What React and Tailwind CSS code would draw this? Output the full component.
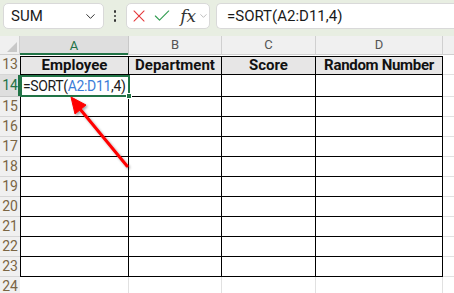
import { X, Check, ChevronDown } from 'lucide-react';

function RowHead({ n, selected }) {
  return (
    <div
      className={
        'flex w-[20px] shrink-0 items-center justify-center border-b text-[14px] ' +
        (selected
          ? 'border-b-[#c8c8c8] bg-[#dedede] text-[#217346] shadow-[inset_-2px_0_0_#217346]'
          : 'border-b-[#d6d6d6] bg-[#f0f0f0] text-[#7a6544]')
      }
    >
      {n}
    </div>
  );
}

function BlankRow({ n, h = 'h-[20px]' }) {
  return (
    <div className={'flex ' + h}>
      <RowHead n={n} />
      <div className="w-[109px] border-x border-b border-black" />
      <div className="w-[93px] border-r border-b border-black" />
      <div className="w-[94px] border-r border-b border-black" />
      <div className="w-[127px] border-r border-b border-black" />
      <div className="flex-1 border-b border-[#e1e1e1]" />
    </div>
  );
}

export default function App() {
  const rows = [15, 16, 17, 18, 19, 20, 21, 22, 23];

  return (
    <div className="relative h-[293px] w-[454px] overflow-hidden bg-white font-['Roboto',sans-serif] text-[#1a1a1a]">
      {/* formula bar */}
      <div className="flex h-[36px] items-start bg-[#e8eee2] pt-[3px]">
        <div className="ml-[3px] flex h-[26px] w-[101px] items-center justify-between rounded-[5px] border border-[#d9d9d9] bg-white pl-[7px] pr-[5px]">
          <span className="text-[15px]">SUM</span>
          <ChevronDown size={15} strokeWidth={1.6} className="text-[#333]" />
        </div>
        <div className="flex h-[26px] w-[22px] flex-col items-center justify-center gap-[2px]">
          <span className="h-[2.5px] w-[2.5px] rounded-full bg-[#333]" />
          <span className="h-[2.5px] w-[2.5px] rounded-full bg-[#333]" />
          <span className="h-[2.5px] w-[2.5px] rounded-full bg-[#333]" />
        </div>
        <div className="flex h-[26px] w-[84px] items-center rounded-[5px] border border-[#d9d9d9] bg-white pl-[2px]">
          <X size={22} strokeWidth={1.3} className="text-[#e5383b]" />
          <Check size={22} strokeWidth={1.3} className="ml-[3px] text-[#2e9b4e]" />
          <span className="ml-[8px] font-['DejaVu_Serif',serif] text-[17px] italic leading-none text-[#333]">fx</span>
          <ChevronDown size={12} strokeWidth={1.4} className="ml-[2px] text-[#999]" />
        </div>
        <div className="ml-[6px] flex h-[26px] flex-1 items-center rounded-l-[5px] border border-r-0 border-[#d9d9d9] bg-white pl-[10px] text-[15px]">
          =SORT(A2:D11,4)
        </div>
      </div>

      {/* column headers */}
      <div className="flex h-[19px] bg-[#f0f0f0] text-[13px] text-[#555]">
        <div className="relative w-[20px] border-r border-b border-[#d0d0d0]">
          <span className="absolute bottom-[2px] right-[2px] h-0 w-0 border-b-[10px] border-l-[10px] border-b-[#c8c8c8] border-l-transparent" />
        </div>
        <div className="flex w-[109px] items-center justify-center border-r border-[#c8c8c8] bg-[#dedede] text-[#217346] shadow-[inset_0_-2px_0_#217346]">A</div>
        <div className="flex w-[93px] items-center justify-center border-r border-b border-[#d0d0d0]">B</div>
        <div className="flex w-[94px] items-center justify-center border-r border-b border-[#d0d0d0]">C</div>
        <div className="flex w-[127px] items-center justify-center border-r border-b border-[#d0d0d0]">D</div>
        <div className="flex-1 border-b border-[#d0d0d0]" />
      </div>

      {/* row 13 headers */}
      <div className="flex h-[20px]">
        <RowHead n={13} />
        <div className="flex pt-[1px] text-[15px] font-bold text-[#111]">
          <div className="flex w-[109px] items-center justify-center border border-black bg-[#e7e6e6]">Employee</div>
          <div className="flex w-[93px] items-center justify-center border-y border-r border-black bg-[#e7e6e6]">Department</div>
          <div className="flex w-[94px] items-center justify-center border-y border-r border-black bg-[#e7e6e6]">Score</div>
          <div className="flex w-[127px] items-center justify-center border-y border-r border-black bg-[#e7e6e6] tracking-[-0.3px]">Random Number</div>
        </div>
        <div className="flex-1 border-b border-[#e1e1e1]" />
      </div>

      {/* row 14 editing */}
      <div className="flex h-[22px]">
        <RowHead n={14} selected />
        <div className="relative z-10 flex w-[110px] shrink-0 items-center whitespace-nowrap border-2 border-[#217346] bg-white pl-[1px] text-[14px] tracking-[-0.35px]">
          <span className="shrink-0">=SORT(</span>
          <span className="shrink-0 text-[#3b7dd8]">A2:D11</span>
          <span className="shrink-0">,4)</span>
          <span className="absolute -bottom-[4px] -right-[4px] h-[6px] w-[6px] border border-white bg-[#217346]" />
        </div>
        <div className="w-[92px] border-r border-b border-black" />
        <div className="w-[94px] border-r border-b border-black" />
        <div className="w-[127px] border-r border-b border-black" />
        <div className="flex-1 border-b border-[#e1e1e1]" />
      </div>

      {rows.map((n) => (
        <BlankRow key={n} n={n} />
      ))}

      <div className="flex h-[20px]">
        <RowHead n={24} />
        <div className="w-[109px] border-r border-[#e1e1e1]" />
        <div className="w-[93px] border-r border-[#e1e1e1]" />
        <div className="w-[94px] border-r border-[#e1e1e1]" />
        <div className="w-[127px] border-r border-[#e1e1e1]" />
        <div className="flex-1" />
      </div>

      {/* red arrow */}
      <svg className="pointer-events-none absolute inset-0 z-20" width="454" height="293" viewBox="0 0 454 293">
        <defs>
          <filter id="sh" x="-20%" y="-20%" width="140%" height="140%">
            <feDropShadow dx="1.5" dy="1.5" stdDeviation="1.2" floodColor="#000" floodOpacity="0.35" />
          </filter>
        </defs>
        <g filter="url(#sh)" fill="#ff0000" stroke="#ff0000">
          <line x1="127" y1="166" x2="80" y2="109" strokeWidth="3" strokeLinecap="round" />
          <polygon points="71,97 86,105 75,114" strokeWidth="1" strokeLinejoin="round" />
        </g>
      </svg>
    </div>
  );
}
